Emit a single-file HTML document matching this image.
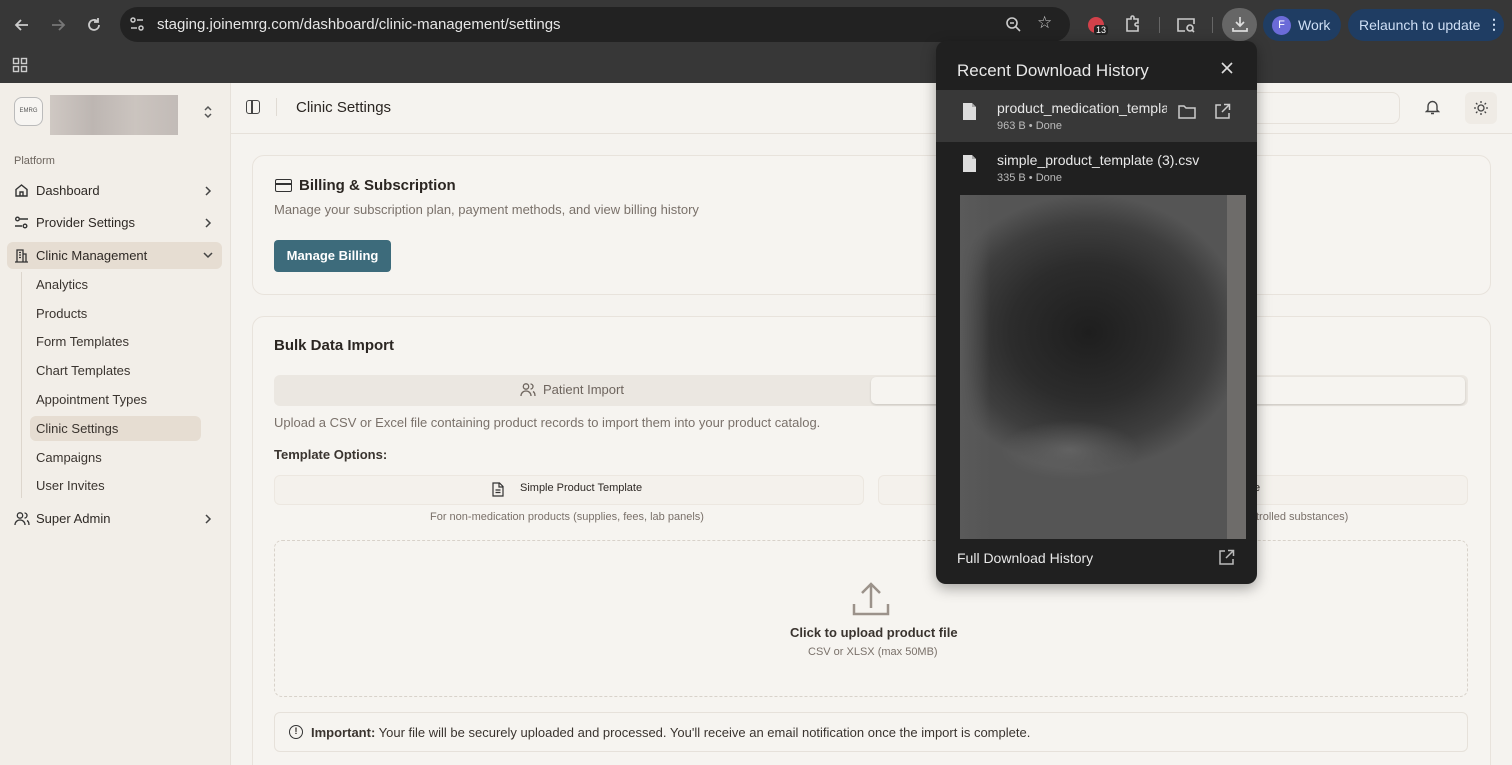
<!DOCTYPE html>
<html><head><meta charset="utf-8"><style>
*{box-sizing:border-box;margin:0;padding:0}
html,body{width:1512px;height:765px;overflow:hidden}
body{font-family:"Liberation Sans",sans-serif;background:#f5f3ef;position:relative;color:#2b2622}
.chrome{position:absolute;left:0;top:0;width:1512px;height:83px;background:#373737}
.url{position:absolute;left:120px;top:7px;width:950px;height:35px;border-radius:18px;background:#222}
.abs{position:absolute}
.side{position:absolute;left:0;top:83px;width:231px;height:682px;background:#f2eee8;border-right:1px solid #e6e1da}
.nav{position:absolute;left:36px;font-size:13px;color:#2e2925}
.sub{position:absolute;left:36px;font-size:13px;color:#3a342f}
.card{position:absolute;background:#f6f4f0;border:1px solid #e8e3dc;border-radius:12px}
.muted{color:#7a716a}
svg{position:absolute}
</style></head><body>
<div class="chrome"></div>
<div class="url"></div>
<svg style="left:13px;top:16px" width="18" height="18" viewBox="0 0 18 18" fill="none" stroke="#ccc" stroke-width="1.8"><path d="M15 9H3M8 4L3 9l5 5"/></svg>
<svg style="left:49px;top:16px" width="18" height="18" viewBox="0 0 18 18" fill="none" stroke="#777" stroke-width="1.8"><path d="M3 9h12M10 4l5 5-5 5"/></svg>
<svg style="left:85px;top:16px" width="18" height="18" viewBox="0 0 18 18" fill="none" stroke="#ccc" stroke-width="1.8"><path d="M14 9a5 5 0 1 1-1.5-3.6M13 2v4h-4"/></svg>
<svg style="left:129px;top:16px" width="16" height="16" viewBox="0 0 16 16" fill="none" stroke="#ccc" stroke-width="1.5"><circle cx="4" cy="4" r="2"/><path d="M8 4h6M2 12h6"/><circle cx="12" cy="12" r="2"/></svg>
<div class="abs" style="left:157px;top:16px;color:#e6e6e6;font-size:15px">staging.joinemrg.com/dashboard/clinic-management/settings</div>
<svg style="left:1005px;top:16px" width="17" height="17" viewBox="0 0 17 17" fill="none" stroke="#ccc" stroke-width="1.6"><circle cx="7" cy="7" r="5"/><path d="M11 11l4 4M5 7h4"/></svg>
<div class="abs" style="left:1037px;top:13px;color:#ccc;font-size:17px">☆</div>
<div class="abs" style="left:1088px;top:17px;width:16px;height:16px;border-radius:8px;background:#d2414a"></div>
<div class="abs" style="left:1094px;top:25px;background:#222;color:#fff;font-size:9px;padding:0 2px;border-radius:3px">13</div>
<svg style="left:1124px;top:15px" width="18" height="18" viewBox="0 0 18 18" fill="none" stroke="#ccc" stroke-width="1.6"><path d="M3 4h4V2.5a1.5 1.5 0 0 1 3 0V4h4v4h-1.5a1.5 1.5 0 0 0 0 3H14v5H3z"/></svg>
<div class="abs" style="left:1159px;top:17px;width:1px;height:16px;background:#666"></div>
<svg style="left:1176px;top:16px" width="20" height="18" viewBox="0 0 20 18" fill="none" stroke="#ccc" stroke-width="1.6"><path d="M9 15H2V3h16v5"/><circle cx="14" cy="12" r="3"/><path d="M16 14l2 2"/></svg>
<div class="abs" style="left:1212px;top:17px;width:1px;height:16px;background:#666"></div>
<div class="abs" style="left:1222px;top:8px;width:35px;height:33px;border-radius:17px;background:#666"></div>
<svg style="left:1231px;top:15px" width="18" height="18" viewBox="0 0 18 18" fill="none" stroke="#ddd" stroke-width="1.7"><path d="M9 2v9M5 7l4 4 4-4M2 13v3h14v-3"/></svg>
<div class="abs" style="left:1263px;top:9px;width:78px;height:32px;border-radius:16px;background:#1f3d63"></div>
<div class="abs" style="left:1272px;top:16px;width:19px;height:19px;border-radius:10px;background:#6b6bd8;color:#fff;font-size:11px;text-align:center;line-height:19px">F</div>
<div class="abs" style="left:1298px;top:17px;color:#cfdff5;font-size:14px">Work</div>
<div class="abs" style="left:1348px;top:9px;width:156px;height:32px;border-radius:16px;background:#1f3d63"></div>
<div class="abs" style="left:1359px;top:17px;color:#cfdff5;font-size:14px">Relaunch to update</div>
<div class="abs" style="left:1487px;top:16px;color:#cfdff5;font-size:14px;font-weight:bold">⋮</div>
<svg style="left:12px;top:57px" width="16" height="16" viewBox="0 0 16 16" fill="none" stroke="#ccc" stroke-width="1.4"><rect x="1.5" y="1.5" width="5" height="5"/><rect x="9.5" y="1.5" width="5" height="5"/><rect x="1.5" y="9.5" width="5" height="5"/><rect x="9.5" y="9.5" width="5" height="5"/></svg>

<div class="side"></div>
<div class="abs" style="left:14px;top:97px;width:29px;height:29px;border:1px solid #bbb;border-radius:8px;background:#f7f5f2;font-size:6px;text-align:center;line-height:27px;color:#555">EMRG</div>
<div class="abs" style="left:50px;top:95px;width:128px;height:40px;background:linear-gradient(90deg,#cfc8c3,#bdb6b2,#cbc4bf,#c2bbb7);"></div>
<svg style="left:202px;top:104px" width="12" height="16" viewBox="0 0 12 16" fill="none" stroke="#555" stroke-width="1.5"><path d="M3 6l3-3 3 3M3 10l3 3 3-3"/></svg>
<div class="abs" style="left:14px;top:155px;font-size:11px;color:#6d655e">Platform</div>
<svg style="left:14px;top:183px" width="15" height="15" viewBox="0 0 15 15" fill="none" stroke="#333" stroke-width="1.4"><path d="M2 6.5L7.5 2 13 6.5V13H2zM6 13V9h3v4"/></svg>
<div class="nav" style="top:183px">Dashboard</div>
<svg style="left:203px;top:185px" width="10" height="12" viewBox="0 0 10 12" fill="none" stroke="#444" stroke-width="1.5"><path d="M3 2l4 4-4 4"/></svg>
<svg style="left:14px;top:215px" width="15" height="15" viewBox="0 0 15 15" fill="none" stroke="#333" stroke-width="1.4"><circle cx="3.5" cy="4" r="1.8"/><path d="M6 4h8M1 11h7"/><circle cx="11" cy="11" r="1.8"/></svg>
<div class="nav" style="top:215px">Provider Settings</div>
<svg style="left:203px;top:217px" width="10" height="12" viewBox="0 0 10 12" fill="none" stroke="#444" stroke-width="1.5"><path d="M3 2l4 4-4 4"/></svg>
<div class="abs" style="left:7px;top:242px;width:215px;height:27px;border-radius:6px;background:#e6ddd2"></div>
<svg style="left:14px;top:248px" width="15" height="15" viewBox="0 0 15 15" fill="none" stroke="#333" stroke-width="1.3"><path d="M3 14V2h6v12M9 6h3v8M1 14h13M5 4.5h2M5 7h2M5 9.5h2"/></svg>
<div class="nav" style="top:248px">Clinic Management</div>
<svg style="left:202px;top:250px" width="12" height="10" viewBox="0 0 12 10" fill="none" stroke="#444" stroke-width="1.5"><path d="M2 3l4 4 4-4"/></svg>
<div class="abs" style="left:21px;top:272px;width:1px;height:226px;background:#ddd6cd"></div>
<div class="sub" style="top:277px">Analytics</div>
<div class="sub" style="top:306px">Products</div>
<div class="sub" style="top:334px">Form Templates</div>
<div class="sub" style="top:363px">Chart Templates</div>
<div class="sub" style="top:392px">Appointment Types</div>
<div class="abs" style="left:30px;top:416px;width:171px;height:25px;border-radius:6px;background:#e6ddd2"></div>
<div class="sub" style="top:421px">Clinic Settings</div>
<div class="sub" style="top:450px">Campaigns</div>
<div class="sub" style="top:478px">User Invites</div>
<svg style="left:14px;top:511px" width="16" height="15" viewBox="0 0 16 15" fill="none" stroke="#333" stroke-width="1.3"><circle cx="6" cy="4.5" r="2.7"/><path d="M1 14c0-3 2.2-5 5-5s5 2 5 5M10.5 2a2.5 2.5 0 0 1 0 5M13 9.5c1.3.7 2 2.3 2 4.5"/></svg>
<div class="nav" style="top:511px">Super Admin</div>
<svg style="left:203px;top:513px" width="10" height="12" viewBox="0 0 10 12" fill="none" stroke="#444" stroke-width="1.5"><path d="M3 2l4 4-4 4"/></svg>

<div class="abs" style="left:231px;top:83px;width:1281px;height:51px;border-bottom:1px solid #e6e1da;background:#f5f3ef"></div>
<div class="abs" style="left:246px;top:100px;width:14px;height:14px;border:1.5px solid #444;border-radius:3px"></div>
<div class="abs" style="left:251px;top:101px;width:1.5px;height:12px;background:#444"></div>
<div class="abs" style="left:276px;top:98px;width:1px;height:18px;background:#e0dbd4"></div>
<div class="abs" style="left:296px;top:99px;font-size:15px;color:#2a2521">Clinic Settings</div>
<div class="abs" style="left:1180px;top:92px;width:220px;height:32px;border:1px solid #e6e1da;border-radius:8px"></div>
<svg style="left:1425px;top:99px" width="15" height="16" viewBox="0 0 15 16" fill="none" stroke="#444" stroke-width="1.4"><path d="M3 11V7a4.5 4.5 0 0 1 9 0v4l1.5 1.5h-12zM6 14.5h3"/></svg>
<div class="abs" style="left:1465px;top:92px;width:32px;height:32px;background:#efebe5;border-radius:6px"></div>
<svg style="left:1473px;top:100px" width="16" height="16" viewBox="0 0 16 16" fill="none" stroke="#444" stroke-width="1.3"><circle cx="8" cy="8" r="3"/><path d="M8 1v2M8 13v2M1 8h2M13 8h2M3 3l1.4 1.4M11.6 11.6L13 13M3 13l1.4-1.4M11.6 4.4L13 3"/></svg>

<div class="card" style="left:252px;top:155px;width:1239px;height:140px"></div>
<div class="abs" style="left:275px;top:179px;width:17px;height:13px;border:1.5px solid #333;border-radius:2px"></div>
<div class="abs" style="left:275px;top:183px;width:17px;height:1.5px;background:#333"></div>
<div class="abs" style="left:299px;top:177px;font-size:15px;font-weight:bold">Billing &amp; Subscription</div>
<div class="abs muted" style="left:274px;top:202px;font-size:13px">Manage your subscription plan, payment methods, and view billing history</div>
<div class="abs" style="left:274px;top:240px;width:117px;height:32px;border-radius:4px;background:#3d6b7b;color:#fff;font-size:13px;text-align:center;line-height:32px;font-weight:bold">Manage Billing</div>

<div class="card" style="left:252px;top:316px;width:1239px;height:470px"></div>
<div class="abs" style="left:274px;top:337px;font-size:15px;font-weight:bold">Bulk Data Import</div>
<div class="abs" style="left:274px;top:375px;width:1194px;height:31px;border-radius:6px;background:#ebe7e1"></div>
<div class="abs" style="left:871px;top:377px;width:594px;height:27px;border-radius:5px;background:#f6f4f0;box-shadow:0 1px 2px rgba(0,0,0,.15)"></div>
<svg style="left:520px;top:382px" width="16" height="15" viewBox="0 0 16 15" fill="none" stroke="#6e655e" stroke-width="1.3"><circle cx="6" cy="4.5" r="2.7"/><path d="M1 14c0-3 2.2-5 5-5s5 2 5 5M10.5 2a2.5 2.5 0 0 1 0 5M13 9.5c1.3.7 2 2.3 2 4.5"/></svg>
<div class="abs" style="left:543px;top:382px;font-size:13px;color:#6e655e">Patient Import</div>
<div class="abs muted" style="left:274px;top:415px;font-size:13px">Upload a CSV or Excel file containing product records to import them into your product catalog.</div>
<div class="abs" style="left:274px;top:447px;font-size:13px;font-weight:bold;color:#3a342f">Template Options:</div>
<div class="abs" style="left:274px;top:475px;width:590px;height:30px;border:1px solid #ece7e0;border-radius:6px;background:#f4f1ec"></div>
<div class="abs" style="left:878px;top:475px;width:590px;height:30px;border:1px solid #ece7e0;border-radius:6px;background:#f4f1ec"></div>
<svg style="left:492px;top:482px" width="12" height="15" viewBox="0 0 12 15" fill="none" stroke="#333" stroke-width="1.2"><path d="M1 1h6.5L11 4.5V14H1zM7 1v4h4M3.5 8h5M3.5 10.5h5"/></svg>
<div class="abs" style="left:520px;top:482px;font-size:11px;color:#2e2925">Simple Product Template</div>
<div class="abs" style="left:1254px;top:482px;font-size:11px">e</div>
<div class="abs muted" style="left:430px;top:511px;font-size:11px">For non-medication products (supplies, fees, lab panels)</div>
<div class="abs muted" style="left:1256px;top:511px;font-size:11px">trolled substances)</div>
<div class="abs" style="left:274px;top:540px;width:1194px;height:157px;border:1.5px dashed #d8d2ca;border-radius:8px"></div>
<svg style="left:852px;top:580px" width="38" height="38" viewBox="0 0 38 38" fill="none" stroke="#9b928a" stroke-width="2.5"><path d="M2 24v10h34V24M19 28V4M10 13l9-9 9 9"/></svg>
<div class="abs" style="left:790px;top:625px;font-size:13px;font-weight:bold;color:#3a342f">Click to upload product file</div>
<div class="abs muted" style="left:808px;top:646px;font-size:11px">CSV or XLSX (max 50MB)</div>
<div class="abs" style="left:274px;top:712px;width:1194px;height:40px;border:1px solid #e6e1da;border-radius:6px"></div>
<div class="abs" style="left:289px;top:725px;width:14px;height:14px;border:1.5px solid #333;border-radius:7px;font-size:9px;text-align:center;line-height:11px;font-weight:bold">!</div>
<div class="abs" style="left:311px;top:725px;font-size:13px;color:#3a342f"><b>Important:</b> Your file will be securely uploaded and processed. You'll receive an email notification once the import is complete.</div>

<div class="abs" style="left:936px;top:41px;width:321px;height:543px;background:#202020;border-radius:10px;box-shadow:0 4px 14px rgba(0,0,0,.35)"></div>
<div class="abs" style="left:957px;top:61px;font-size:17px;color:#e8e8e8">Recent Download History</div>
<svg style="left:1221px;top:62px" width="12" height="12" viewBox="0 0 12 12" stroke="#ddd" stroke-width="1.6"><path d="M1 1l10 10M11 1L1 11"/></svg>
<div class="abs" style="left:936px;top:90px;width:321px;height:52px;background:#383838"></div>
<svg style="left:962px;top:102px" width="15" height="19" viewBox="0 0 15 19"><path d="M1 1h9l4 4v13H1z" fill="#ddd"/><path d="M10 1v4h4" fill="#aaa"/></svg>
<div class="abs" style="left:997px;top:100px;font-size:14px;color:#e8e8e8;width:170px;overflow:hidden;white-space:nowrap">product_medication_template</div>
<div class="abs" style="left:997px;top:120px;font-size:11px;color:#bbb">963 B • Done</div>
<svg style="left:1178px;top:104px" width="18" height="15" viewBox="0 0 18 15" fill="none" stroke="#ccc" stroke-width="1.5"><path d="M1 2h5l2 2h9v10H1z"/></svg>
<svg style="left:1214px;top:103px" width="17" height="17" viewBox="0 0 17 17" fill="none" stroke="#ccc" stroke-width="1.5"><path d="M7 2H2v13h13v-5M10 1.5h5.5V7M15.5 1.5L8 9"/></svg>
<svg style="left:962px;top:154px" width="15" height="19" viewBox="0 0 15 19"><path d="M1 1h9l4 4v13H1z" fill="#ddd"/><path d="M10 1v4h4" fill="#aaa"/></svg>
<div class="abs" style="left:997px;top:152px;font-size:14px;color:#e8e8e8">simple_product_template (3).csv</div>
<div class="abs" style="left:997px;top:172px;font-size:11px;color:#bbb">335 B • Done</div>
<div class="abs" style="left:960px;top:195px;width:286px;height:344px;background:radial-gradient(ellipse 55% 40% at 45% 40%,#1e1e1e 0%,#2c2c2c 50%,#3e3e3e 80%,#555 100%);"></div>
<div class="abs" style="left:960px;top:195px;width:30px;height:344px;background:linear-gradient(90deg,#5a5a5a,rgba(70,70,70,0))"></div>
<div class="abs" style="left:1000px;top:420px;width:140px;height:60px;background:radial-gradient(ellipse at center,rgba(110,110,110,.7),rgba(70,70,70,0) 70%)"></div>
<div class="abs" style="left:1227px;top:195px;width:19px;height:344px;background:#6e6c6a"></div>
<div class="abs" style="left:957px;top:550px;font-size:14px;color:#e8e8e8">Full Download History</div>
<svg style="left:1218px;top:549px" width="17" height="17" viewBox="0 0 17 17" fill="none" stroke="#bbb" stroke-width="1.5"><path d="M7 2H2v13h13v-5M10 1.5h5.5V7M15.5 1.5L8 9"/></svg>
</body></html>
